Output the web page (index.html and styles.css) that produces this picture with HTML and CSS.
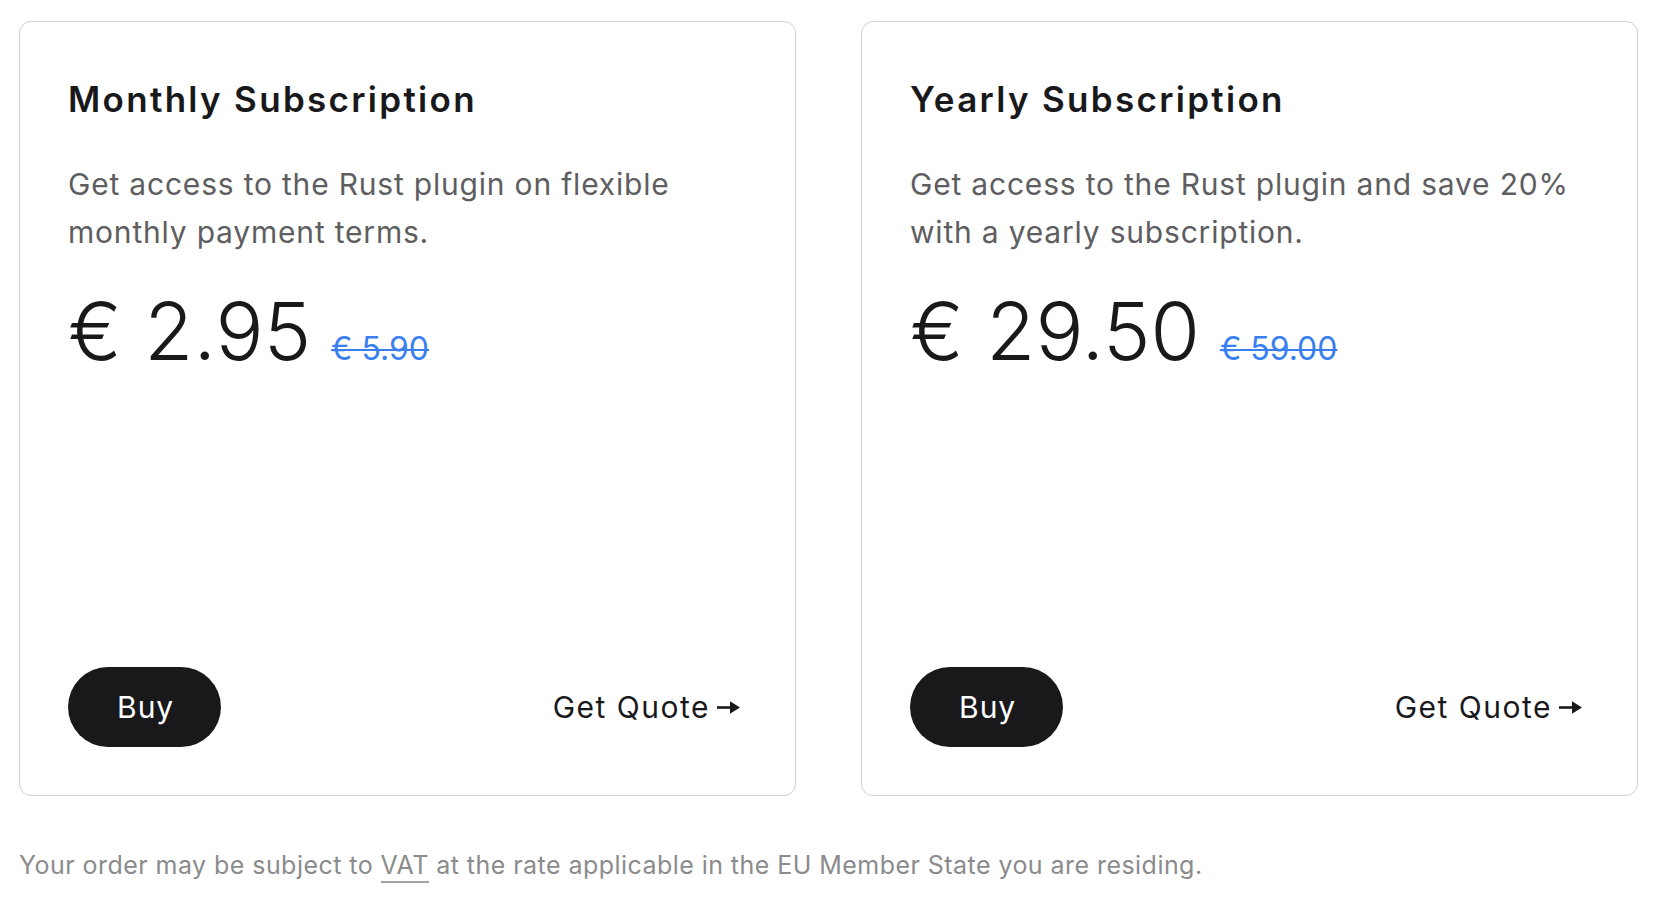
FILE: index.html
```html
<!DOCTYPE html>
<html lang="en">
<head>
<meta charset="utf-8">
<title>Rust plugin pricing</title>
<link rel="stylesheet" href="styles.css">
</head>
<body>
<main class="page">
  <div class="plans">
    <section class="card">
      <div class="card-body">
        <h2 class="title">Monthly Subscription</h2>
        <p class="desc">Get access to the Rust plugin on flexible monthly payment terms.</p>
        <div class="price"><span class="price-now">€ 2.95</span><s class="price-old">€ 5.90</s></div>
      </div>
      <div class="actions">
        <button class="buy" type="button">Buy</button>
        <a class="quote" href="#">Get Quote<svg class="arrow" width="23" height="13" viewBox="0 0 23 13" aria-hidden="true"><path d="M0 5.2h14v2.6H0z" fill="currentColor"/><path d="M13 0.3L23 6.5L13 12.7z" fill="currentColor"/></svg></a>
      </div>
    </section>
    <section class="card">
      <div class="card-body">
        <h2 class="title">Yearly Subscription</h2>
        <p class="desc">Get access to the Rust plugin and save 20% with a yearly subscription.</p>
        <div class="price"><span class="price-now">€ 29.50</span><s class="price-old">€ 59.00</s></div>
      </div>
      <div class="actions">
        <button class="buy" type="button">Buy</button>
        <a class="quote" href="#">Get Quote<svg class="arrow" width="23" height="13" viewBox="0 0 23 13" aria-hidden="true"><path d="M0 5.2h14v2.6H0z" fill="currentColor"/><path d="M13 0.3L23 6.5L13 12.7z" fill="currentColor"/></svg></a>
      </div>
    </section>
  </div>
  <p class="note">Your order may be subject to <span class="vat">VAT</span> at the rate applicable in the EU Member State you are residing.</p>
</main>
</body>
</html>
```
FILE: styles.css
```css
* { box-sizing: border-box; }

html, body {
  margin: 0;
  padding: 0;
  background: #ffffff;
}

body {
  font-family: Inter, "Noto Sans", "Liberation Sans", sans-serif;
  color: #19191c;
}

.page {
  padding: 21px 29px 0 19px;
}

.plans {
  display: grid;
  grid-template-columns: 1fr 1fr;
  column-gap: 65px;
}

.card {
  display: flex;
  flex-direction: column;
  justify-content: space-between;
  min-height: 775px;
  border: 1.5px solid #d0d0d2;
  border-radius: 12px;
  padding: 57px 48px 48px 48px;
}

.title {
  margin: 0;
  font-size: 35px;
  line-height: 40px;
  font-weight: 600;
  letter-spacing: 2.3px;
  color: #19191c;
}

.desc {
  margin: 41px 0 0 0;
  font-size: 30px;
  line-height: 48px;
  font-weight: 400;
  letter-spacing: 0.8px;
  color: #5e5e61;
}

.price {
  margin-top: 35px;
  display: flex;
  align-items: baseline;
  gap: 20px;
}

.price-now {
  font-size: 80px;
  line-height: 80px;
  font-weight: 300;
  color: #19191c;
}

.price-old {
  font-size: 32px;
  line-height: 32px;
  font-weight: 400;
  color: #3a7ff0;
  text-decoration-thickness: 2px;
}

.actions {
  display: flex;
  align-items: center;
  justify-content: space-between;
}

.buy {
  height: 80px;
  padding: 0 47px 0 49px;
  border: none;
  border-radius: 40px;
  background: #19191c;
  color: #ffffff;
  font-family: inherit;
  font-size: 30px;
  font-weight: 400;
  letter-spacing: 1px;
  cursor: pointer;
}

.quote {
  display: flex;
  align-items: center;
  gap: 7px;
  margin-right: 7px;
  font-size: 30px;
  font-weight: 400;
  letter-spacing: 1.5px;
  color: #19191c;
  text-decoration: none;
}

.arrow {
  display: block;
}

.note {
  margin: 51px 0 0 0;
  font-size: 25px;
  line-height: 36px;
  letter-spacing: 0.45px;
  color: #8b8b8d;
}

.vat {
  border-bottom: 2px solid #a3a3a5;
  padding-bottom: 1px;
}
```
